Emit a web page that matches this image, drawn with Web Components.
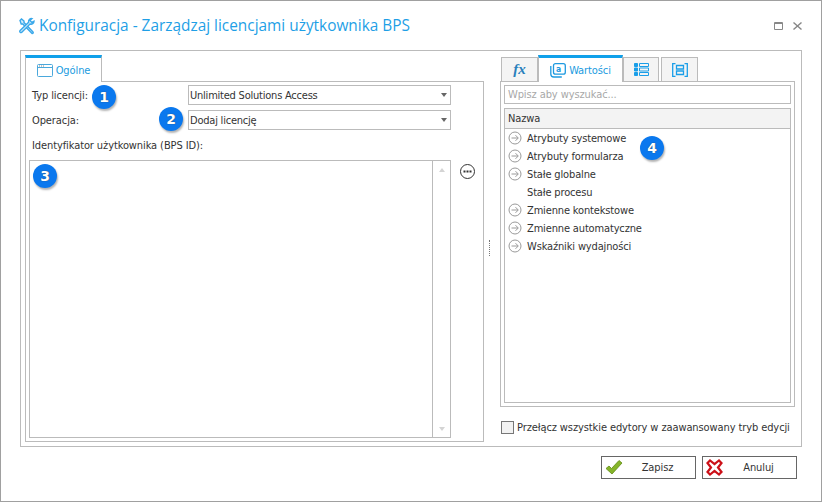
<!DOCTYPE html>
<html>
<head>
<meta charset="utf-8">
<title>Konfiguracja</title>
<style>
  html, body { margin: 0; padding: 0; background: #fff; }
</style>
</head>
<body>
<config-dialog></config-dialog>

<script>
const FONT = '"DejaVu Sans Condensed", "DejaVu Sans", sans-serif'

const ARROW = `<svg width="14" height="14" viewBox="0 0 14 14" fill="none" stroke="#9a9a9a">
  <circle cx="7" cy="7" r="6"/><path d="M3.5 7h6.500M7.500 4.200 10.300 7 7.500 9.800"/></svg>`

// small numbered marker lying over the form
customElements.define('num-badge', class extends HTMLElement {
  constructor () {
    super()
    this.attachShadow({ mode: 'open' }).innerHTML = `
      <style>
        :host {
          position: absolute;
          width: 24px;
          height: 24px;
          border-radius: 50%;
          background: #0a78ee;
          color: #fff;
          font: bold 14px/24px "DejaVu Sans", sans-serif;
          text-align: center;
          box-shadow: 1px 2px 2px rgba(0, 0, 0, .3);
          text-shadow: 0 0 1px #333;
        }
      </style><slot></slot>`
  }
})

customElements.define('drop-select', class extends HTMLElement {
  constructor () {
    super()
    this.attachShadow({ mode: 'open' }).innerHTML = `
      <style>
        :host {
          display: flex;
          align-items: center;
          box-sizing: border-box;
          width: 263px;
          height: 20px;
          border: 1px solid #bbb;
          padding: 0 3px 0 1px;
          font: 11px ${FONT};
          font-stretch: condensed;
          letter-spacing: -.22px;
          color: #333;
        }
        span { flex: 1; }
        i { border: 3.500px solid transparent; border-top: 4px solid #666; border-bottom: 0; }
      </style><span><slot></slot></span><i></i>`
  }
})

customElements.define('tree-row', class extends HTMLElement {
  constructor () {
    super()
    this.attachShadow({ mode: 'open' }).innerHTML = `
      <style>
        :host {
          display: flex;
          align-items: center;
          gap: 5px;
          height: 18px;
          padding-left: 3px;
          font: 11px ${FONT};
          font-stretch: condensed;
          letter-spacing: -.15px;
          color: #333;
        }
        #icon { width: 14px; height: 14px; display: block; }
      </style><span id="icon">${this.hasAttribute('plain') ? '' : ARROW}</span><slot></slot>`
  }
})

customElements.define('tool-button', class extends HTMLElement {
  constructor () {
    super()
    this.attachShadow({ mode: 'open' }).innerHTML = `
      <style>
        :host {
          display: flex;
          align-items: center;
          position: relative;
          box-sizing: border-box;
          width: 95px;
          height: 23px;
          border: 1px solid #666;
          padding-left: 3px;
          font: 11px ${FONT};
          font-stretch: condensed;
          color: #333;
        }
        span { position: absolute; left: 0; right: 0; padding-left: 18px; text-align: center; }
        ::slotted(svg) { display: block; }
      </style><slot name="icon"></slot><span><slot></slot></span>`
  }
})

customElements.define('tab-head', class extends HTMLElement {
  constructor () {
    super()
    this.attachShadow({ mode: 'open' }).innerHTML = `
      <style>
        :host {
          display: flex;
          align-items: center;
          justify-content: center;
          gap: 3px;
          box-sizing: border-box;
          height: 24px;
          border: 1px solid #bbb;
          border-bottom: 0;
          background: #f4f4f4;
          font: 11px ${FONT};
          font-stretch: condensed;
          color: #1a9be0;
        }
        :host([active]) {
          height: 27px;
          margin-bottom: -1px;
          background: #fff;
          border-top: 3px solid #0fa0ea;
          position: relative;
        }
        ::slotted(svg) { display: block; }
      </style><slot></slot>`
  }
})

customElements.define('config-dialog', class extends HTMLElement {
  constructor () {
    super()
    this.attachShadow({ mode: 'open' }).innerHTML = `
      <style>
        :host {
          display: block;
          position: relative;
          box-sizing: border-box;
          width: 822px;
          height: 502px;
          border: 1px solid #a0a0a0;
          overflow: hidden;
          font: 11px ${FONT};
          font-stretch: condensed;
          letter-spacing: -.1px;
          color: #333;
        }
        header {
          display: flex;
          align-items: center;
          height: 49px;
          padding: 0 19px 0 17px;
          box-sizing: border-box;
        }
        h1 {
          flex: 1;
          margin: 0 0 0 3px;
          font: 400 15.400px "Open Sans", sans-serif;
          letter-spacing: 0;
          color: #1f9fe6;
        }
        .winbtns { display: flex; gap: 10px; align-items: center; }
        #panel {
          box-sizing: border-box;
          margin: 0 19px;
          height: 397px;
          border: 1px solid #bbb;
          padding: 4px 7px 4px 4px;
          display: flex;
        }
        #left { width: 459px; display: flex; flex-direction: column; flex: none; }
        #split { width: 16px; flex: none; display: flex; align-items: center; justify-content: center; }
        #split i { height: 16px; border-left: 1px dotted #777; margin: -2px 6px 0 0; }
        #right { width: 295px; flex: none; display: flex; flex-direction: column; }
        .tabs { display: flex; align-items: flex-end; height: 26px; flex: none; }
        #left-body {
          flex: 1;
          box-sizing: border-box;
          border: 1px solid #bbb;
          padding: 3px;
          display: flex;
          flex-direction: column;
        }
        .row { display: flex; align-items: center; height: 20px; margin-bottom: 5px; padding-left: 3px; }
        .row label { width: 156px; }
        .row + .row label { padding-top: 1px; }
        .id-label { height: 25px; padding: 4px 0 0 3px; box-sizing: border-box; }
        #edit-row { flex: 1; display: flex; }
        #edit {
          box-sizing: border-box;
          width: 422px;
          flex: none;
          border: 1px solid #bbb;
          display: flex;
          justify-content: flex-end;
        }
        #scroll { width: 17px; border-left: 1px solid #bbb; display: flex; flex-direction: column; justify-content: space-between; align-items: center; padding: 7px 0 6px; }
        #scroll i { border: 3px solid transparent; }
        #scroll i:first-child { border-bottom: 4px solid #d4d4d4; border-top: 0; }
        #scroll i:last-child { border-top: 4px solid #d4d4d4; border-bottom: 0; }
        #more { flex: none; margin: 4px 0 0 9px; }
        #values {
          box-sizing: border-box;
          height: 326px;
          flex: none;
          border: 1px solid #bbb;
          padding: 3px;
          display: flex;
          flex-direction: column;
          gap: 4px;
        }
        #search {
          box-sizing: border-box;
          height: 19px;
          border: 1px solid #bbb;
          padding: 0 3px;
          line-height: 17px;
          color: #a8a8a8;
          flex: none;
        }
        #grid { flex: 1; border: 1px solid #bbb; }
        #grid-head { height: 19px; line-height: 19px; padding-left: 3px; background: #f3f3f3; border-bottom: 1px solid #bbb; }
        #toggle { display: flex; align-items: center; gap: 3px; margin: 12px 0 0 1px; white-space: nowrap; line-height: 15px; }
        #toggle span + span { padding-top: 1px; }
        #box { width: 11px; height: 11px; flex: none; border: 1px solid #777; background: #f2f2f2; }
        footer { display: flex; justify-content: flex-end; gap: 6px; padding: 9px 24px 0 0; }
        #badges { position: absolute; inset: 0; pointer-events: none; }
      </style>

      <header>
        <svg width="18" height="18" viewBox="0 0 18 18" fill="#cfeafa" stroke="#3aa8ea" stroke-width="1.400">
          <path d="M2 3.500 3.500 2l2.500 2v1.500L15 15c.8 1-.4 2-1.200 1.200L4.800 7H3.200Z"/>
          <path d="M16 4.200a3 3 0 0 1-4 2.800L3.600 15.400a1.200 1.200 0 0 1-1.700-1.600L10.600 5.200A3 3 0 0 1 14 1.600l-2 2 1.800 1.800Z"/>
        </svg>
        <h1>Konfiguracja - Zarządzaj licencjami użytkownika BPS</h1>
        <div class="winbtns">
          <svg width="9" height="8" viewBox="0 0 9 8" fill="none" stroke="#888"><path d="M.5.5h8v7h-8zM.5 1.500h8"/></svg>
          <svg width="9" height="8" viewBox="0 0 9 8" fill="none" stroke="#888" stroke-width="1.400"><path d="M.5.5l8 7M8.500.5l-8 7"/></svg>
        </div>
      </header>

      <div id="panel">
        <section id="left">
          <div class="tabs">
            <tab-head active style="width:77px">
              <svg width="16" height="13" viewBox="0 0 16 13" fill="none" stroke="#4aa8dc"><rect x=".5" y=".5" width="15" height="12" rx="1"/><path d="M.5 3.500h15"/><path d="M2 2h1M4 2h1M6 2h1" stroke="#888"/></svg>
              Ogólne
            </tab-head>
          </div>
          <div id="left-body">
            <div class="row"><label>Typ licencji:</label><drop-select>Unlimited Solutions Access</drop-select></div>
            <div class="row"><label>Operacja:</label><drop-select>Dodaj licencję</drop-select></div>
            <div class="id-label">Identyfikator użytkownika (BPS ID):</div>
            <div id="edit-row">
              <div id="edit"><div id="scroll"><i></i><i></i></div></div>
              <svg id="more" width="15" height="15" viewBox="0 0 15 15" fill="none" stroke="#333"><circle cx="7.500" cy="7.500" r="7"/><path d="M3.500 7.500h2M6.500 7.500h2M9.500 7.500h2" stroke-width="2"/></svg>
            </div>
          </div>
        </section>
        <div id="split"><i></i></div>
        <section id="right">
          <div class="tabs">
            <tab-head style="width:37px;margin-left:1px">
              <span style="font:italic bold 15px 'Liberation Serif',serif;color:#2a80bc">fx</span>
            </tab-head>
            <tab-head active style="width:85px">
              <svg width="16" height="15" viewBox="0 0 16 15" fill="none" stroke="#1e9ae0" stroke-width="1.300"><rect x="3.500" y=".7" width="11.800" height="10.500" rx="2"/><path d="M.8 3v8c0 2 1 3 3 3h8"/><text x="6" y="9" font-size="8.500" font-family="DejaVu Sans" fill="#1e9ae0" stroke="none" font-weight="700">a</text></svg>
              Wartości
            </tab-head>
            <tab-head style="width:36px">
              <svg width="15" height="13" viewBox="0 0 15 13" fill="none" stroke="#1a9ee8"><path d="M5.500.5h9v3h-9zM5.500 5h9v3h-9zM5.500 9.500h9v3h-9z"/><path d="M.5.5h3v3h-3zM.5 5h3v3h-3zM.5 9.500h3v3h-3z" fill="#1a9ee8"/></svg>
            </tab-head>
            <tab-head style="width:37px;margin-left:2px">
              <svg width="16" height="14" viewBox="0 0 16 14" fill="none" stroke="#1a9ee8" stroke-width="1.300"><path d="M3.500.7H.7v12.600h2.800M12.500.7h2.800v12.600h-2.800M4.500 2.500h7v3.500h-7zM4.500 8h7v3.500h-7z"/></svg>
            </tab-head>
          </div>
          <div id="values">
            <div id="search">Wpisz aby wyszukać...</div>
            <div id="grid">
              <div id="grid-head">Nazwa</div>
              <tree-row>Atrybuty systemowe</tree-row>
              <tree-row>Atrybuty formularza</tree-row>
              <tree-row>Stałe globalne</tree-row>
              <tree-row plain>Stałe procesu</tree-row>
              <tree-row>Zmienne kontekstowe</tree-row>
              <tree-row>Zmienne automatyczne</tree-row>
              <tree-row>Wskaźniki wydajności</tree-row>
            </div>
          </div>
          <div id="toggle"><span id="box"></span><span>Przełącz wszystkie edytory w zaawansowany tryb edycji</span></div>
        </section>
      </div>

      <footer>
        <tool-button>
          <svg slot="icon" width="18" height="17" viewBox="0 0 18 17"><path d="M1 9.500l3-2.500 2.500 2.500L14 1.500l3 2.500-10 11z" fill="#86b52a" stroke="#5f8a12" stroke-width=".8"/></svg>
          Zapisz
        </tool-button>
        <tool-button>
          <svg slot="icon" width="17" height="17" viewBox="0 0 17 17"><path d="M1.500 4 4 1.500 8.500 5 13 1.500 15.500 4 12 8.500 15.500 13 13 15.500 8.500 12 4 15.500 1.500 13 5 8.500Z" fill="#fff" stroke="#cc1018" stroke-width="2.200"/></svg>
          Anuluj
        </tool-button>
      </footer>

      <div id="badges">
        <num-badge style="left:91px;top:84px">1</num-badge>
        <num-badge style="left:158px;top:106px">2</num-badge>
        <num-badge style="left:32px;top:163px">3</num-badge>
        <num-badge style="left:639px;top:135px">4</num-badge>
      </div>`
  }
})
</script>
</body>
</html>
